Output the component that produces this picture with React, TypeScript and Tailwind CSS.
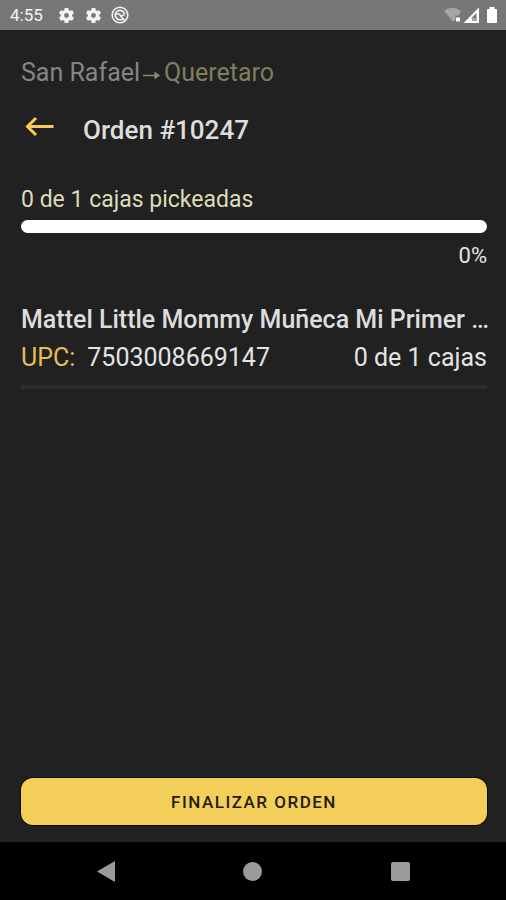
import React from "react";

function GearIcon() {
  return (
    <svg viewBox="0 0 24 24" className="h-[19px] w-[19px] fill-[#f4f4f4]" aria-hidden="true">
      <path d="M19.14 12.94c.04-.3.06-.61.06-.94 0-.32-.02-.64-.07-.94l2.03-1.58c.18-.14.23-.41.12-.61l-1.92-3.32c-.12-.22-.37-.29-.59-.22l-2.39.96c-.5-.38-1.03-.7-1.62-.94l-.36-2.54c-.04-.24-.24-.41-.48-.41h-3.84c-.24 0-.43.17-.47.41l-.36 2.54c-.59.24-1.13.57-1.62.94l-2.39-.96c-.22-.08-.47 0-.59.22L2.74 8.87c-.12.21-.08.47.12.61l2.03 1.58c-.05.3-.09.63-.09.94s.02.64.07.94l-2.03 1.58c-.18.14-.23.41-.12.61l1.92 3.32c.12.22.37.29.59.22l2.39-.96c.5.38 1.03.7 1.62.94l.36 2.54c.05.24.24.41.48.41h3.84c.24 0 .44-.17.47-.41l.36-2.54c.59-.24 1.13-.56 1.62-.94l2.39.96c.22.08.47 0 .59-.22l1.92-3.32c.12-.22.07-.47-.12-.61l-2.01-1.58zM12 15.1a3.1 3.1 0 1 1 0-6.2 3.1 3.1 0 0 1 0 6.2z" />
    </svg>
  );
}

function StatusBar() {
  return (
    <header className="flex h-[30px] items-center justify-between bg-[#777777] pr-2 pl-[10px] text-[#f4f4f4]">
      <div className="flex items-center gap-2">
        <span className="mr-[6px] text-[17px] leading-5">4:55</span>
        <GearIcon />
        <GearIcon />
        <svg viewBox="0 0 18 18" className="h-[18px] w-[18px]" fill="none" stroke="#f4f4f4" aria-hidden="true">
          <circle cx="9" cy="9" r="7.8" strokeWidth="1.6" />
          <path d="M12.500 12.200A4.700 4.700 0 1 1 13.600 8.200" strokeWidth="1.7" />
          <path d="M5 8.500c2-1.500 3.500-.5 4.300.5s2 1.200 4.500-.5M8.500 9l5 5" strokeWidth="1.5" />
        </svg>
      </div>
      <svg viewBox="0 0 54 18" className="h-[18px] w-[54px]" aria-hidden="true">
        <path d="M0 5Q8.500-1.500 17 5L14.500 9.500H11.500V14L9 15.500Z" fill="#a6a6a6" />
        <rect x="12" y="11.500" width="4" height="4" fill="#fff" />
        <path d="M19.500 17L35 1.500V17Z" fill="#fff" />
        <path d="M27 12.500L32.500 7V12.500Z" fill="#777777" />
        <path d="M28 12h5v3h-5z" fill="#a6a6a6" />
        <path d="M45.500 1h5v2h1.500q1 0 1 1v12q0 1-1 1h-8q-1 0-1-1V4q0-1 1-1h1.500z" fill="#fff" />
      </svg>
    </header>
  );
}

function NavigationBar() {
  return (
    <nav className="grid h-[58px] grid-cols-3 bg-black px-8" aria-label="Sistema">
      <button type="button" aria-label="Atrás" className="flex items-center justify-center">
        <svg viewBox="0 0 18 21" className="h-[21px] w-[18px] fill-[#9b9b9b]">
          <path d="M0 10.500L18 0V21Z" />
        </svg>
      </button>
      <button type="button" aria-label="Inicio" className="flex items-center justify-center">
        <span className="h-[19px] w-[19px] rounded-full bg-[#9b9b9b]" />
      </button>
      <button type="button" aria-label="Recientes" className="flex items-center justify-center">
        <span className="h-[19px] w-[19px] rounded-xs bg-[#9b9b9b]" />
      </button>
    </nav>
  );
}

export default function App() {
  const picked = 0;
  const total = 1;
  const percent = Math.round((picked / total) * 100);

  return (
    <div className="flex min-h-screen flex-col bg-[#212121] font-[Roboto,'Liberation_Sans',sans-serif] text-[#e4e4e4]">
      <StatusBar />
      <main className="flex flex-1 flex-col pt-7 pr-[19px] pb-[17px] pl-[21px]">
        <p className="flex items-center text-[25px] leading-[30px] text-[#858585]">
          San Rafael
          <svg viewBox="0 0 24 30" className="h-[30px] w-6" fill="none" stroke="#8d8a68" strokeWidth="1.5" aria-label="a">
            <path d="M3 17.500H18" />
            <path d="M14.500 13.500L20 17.500L14.500 21.500Z" fill="#8d8a68" stroke="none" />
          </svg>
          <span className="text-[#807e60]">Queretaro</span>
        </p>

        <div className="mt-[27px] flex items-center">
          <button type="button" aria-label="Regresar" className="mr-6 pl-1">
            <svg viewBox="0 0 34 30" className="h-[30px] w-[34px]" fill="none" stroke="#f5cd55" strokeWidth="3">
              <path d="M28.500 11.500H2.500M11 3L2.500 11.500L11 20" />
            </svg>
          </button>
          <h1 className="text-[26px] leading-[30px] font-medium text-[#dddddd]">Orden #10247</h1>
        </div>

        <section className="mt-10" aria-labelledby="progress-label">
          <p id="progress-label" className="text-[23px] leading-[30px] text-[#dcdcb8]">
            {picked} de {total} cajas pickeadas
          </p>
          <div
            role="progressbar"
            aria-labelledby="progress-label"
            aria-valuenow={percent}
            className="mt-[5px] h-[13px] overflow-hidden rounded-full bg-white"
          >
            <div className="h-full bg-[#f5cd55]" style={{ width: `${percent}%` }} />
          </div>
          <p className="mt-2 text-right text-[22px] leading-[30px]">{percent}%</p>
        </section>

        <article className="mt-[34px] border-b-4 border-[#2d2d2d] pb-3">
          <h2 className="text-[25px] leading-[30px] font-medium whitespace-nowrap text-[#dddddd]">
            Mattel Little Mommy Muñeca Mi Primer …
          </h2>
          <div className="mt-2 flex justify-between text-[25px] leading-[30px]">
            <p className="flex gap-3">
              <span className="text-[#e3bf55]">UPC:</span>
              <span>7503008669147</span>
            </p>
            <p>
              {picked} de {total} cajas
            </p>
          </div>
        </article>

        <button
          type="button"
          className="mt-auto h-[47px] rounded-xl bg-[#f3cf5a] text-[17px] leading-6 font-medium tracking-[1.5px] text-[#211c08] ring-1 ring-[#0c0c0c]"
        >
          FINALIZAR ORDEN
        </button>
      </main>
      <NavigationBar />
    </div>
  );
}
